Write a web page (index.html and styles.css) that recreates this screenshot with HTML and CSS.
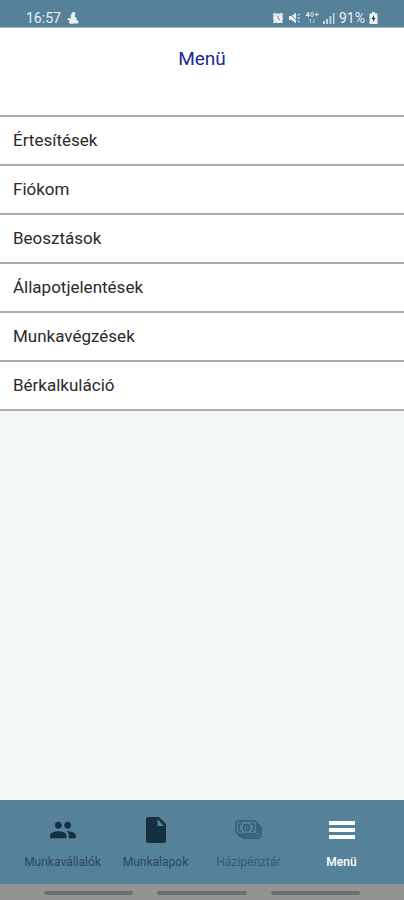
FILE: index.html
```html
<!DOCTYPE html>
<html lang="hu">
<head>
<meta charset="utf-8">
<meta name="viewport" content="width=device-width, initial-scale=1">
<title>Menü</title>
<link rel="stylesheet" href="styles.css">
</head>
<body>
<div class="app">
  <div class="status">
    <span class="status-group">
      <span>16:57</span>
      <svg class="notice" width="12" height="14" viewBox="0 0 12 14" aria-hidden="true"><path d="M5 1.500 7.500 1l1 2-1 2.500L10 7l-1 1.500 2.500 1.500-.5 2.500H7L5 13l-3.500-1L3 9.500.5 9 1 7l3 .5L3.500 5z"/></svg>
    </span>
    <span class="status-group status-right">
      <svg width="12" height="12" viewBox="0 0 12 12" aria-hidden="true"><path d="M.5 2.500 3 .5l1 1L1.500 3.500zM11.500 2.500 9 .5l-1 1 2.500 2zM1 10l2-2 1.500 1.500L2 11.500zM11 10 9 8 7.500 9.500 10 11.500z"/><circle cx="6" cy="6.300" r="4.900"/><path class="cut" d="M6 3.500v3l2 1.200"/></svg>
      <svg width="13" height="12" viewBox="0 0 13 12" aria-hidden="true"><path d="M1 4h2.500L8 .8v10.400L3.500 8H1z"/><path class="wire" d="M9.500 3.500 12 2M9.500 6H12M9.500 8.500l2.500 2"/><path class="cut" d="m1 1 10 10"/></svg>
      <svg width="14" height="13" viewBox="0 0 14 13" aria-hidden="true"><path class="wire" d="M3.500 6V1L1 4.500h3.500M8.500 2.500C8 .5 5.800.8 5.800 3.500s2.700 2.800 2.700.3H7.500M10 3.500h3.500M11.800 1.800v3.500"/><path class="wire faint" d="M5.500 12V8m-1.500 1.500L5.500 8M9 8v4m-1.500-1.500L9 12"/></svg>
      <svg class="signal" width="12" height="12" viewBox="0 0 12 12" aria-hidden="true"><path d="M0 9h2v3H0zM3 7h2v5H3z"/><path d="M6.500 4h1.800v8H6.500zM10 1h1.500v11H10z"/></svg>
      <span>91%</span>
      <svg class="battery" width="9" height="12" viewBox="0 0 9 12" aria-hidden="true"><path d="M3 0h3v1.500h2.500V12H.5V1.500H3z"/><path class="bolt" d="M5 3 2.500 7H4v3l2.500-4H5z"/></svg>
    </span>
  </div>
  <header class="header"><h1>Menü</h1></header>
  <main class="content">
    <ul class="menu">
      <li><a href="#ertesitesek">Értesítések</a></li>
      <li><a href="#fiokom">Fiókom</a></li>
      <li><a href="#beosztasok">Beosztások</a></li>
      <li><a href="#allapotjelentesek">Állapotjelentések</a></li>
      <li><a href="#munkavegzesek">Munkavégzések</a></li>
      <li><a href="#berkalkulacio">Bérkalkuláció</a></li>
    </ul>
  </main>
  <nav class="tabs">
    <a class="tab" href="#munkavallalok">
      <svg width="28" height="28" viewBox="0 0 24 24" aria-hidden="true"><path d="M16 11c1.660 0 2.990-1.340 2.990-3S17.660 5 16 5s-3 1.340-3 3 1.340 3 3 3zm-8 0c1.660 0 2.990-1.340 2.990-3S9.660 5 8 5 5 6.340 5 8s1.340 3 3 3zm0 2c-2.330 0-7 1.170-7 3.500V19h14v-2.500c0-2.330-4.670-3.500-7-3.500zm8 0c-.29 0-.62.020-.97.050 1.160.84 1.970 1.970 1.970 3.450V19h6v-2.500c0-2.330-4.670-3.500-7-3.500z"/></svg>
      <span>Munkavállalók</span>
    </a>
    <a class="tab" href="#munkalapok">
      <svg width="28" height="28" viewBox="0 0 28 28" aria-hidden="true"><path fill-rule="evenodd" d="M6 1h11l7 7v17q0 2-2 2H6q-2 0-2-2V3q0-2 2-2zm9.500 2v7H22z"/></svg>
      <span>Munkalapok</span>
    </a>
    <a class="tab tab-dim" href="#hazipenztar">
      <svg width="28" height="28" viewBox="0 0 28 28" aria-hidden="true"><g class="notes"><path d="M3 5h17l2 2v9l-2 2H3l-2-2V7z"/><path d="M22 7l2 2v9l-2 2H5l-2-2M24 9l2 2v9l-2 2H8l-3-2"/><circle cx="11.500" cy="11.500" r="3"/><path d="M7 8H5L4 9v5l1 1h2M16 8h2l1 1v5l-1 1h-2M11.500 10v3"/></g></svg>
      <span>Házipénztár</span>
    </a>
    <a class="tab tab-active" href="#menu" aria-current="page">
      <svg width="28" height="28" viewBox="0 0 28 28" aria-hidden="true"><path d="M1 5h26v4H1zM1 12h26v4H1zM1 19h26v4H1z"/></svg>
      <span>Menü</span>
    </a>
  </nav>
  <div class="system"><i></i><i></i><i></i></div>
</div>
</body>
</html>
```
FILE: styles.css
```css
* {
  box-sizing: border-box;
}

body {
  margin: 0;
  font-family: Roboto, "Liberation Sans", sans-serif;
  color: #2a2a2a;
}

a {
  color: inherit;
  text-decoration: none;
}

.app {
  display: flex;
  flex-direction: column;
  min-height: 100vh;
  background: #f3f7f8;
}

.status {
  display: flex;
  justify-content: space-between;
  height: 28px;
  padding: 8px 26px 0;
  background: #568299;
  border-bottom: 1px solid #9db7c3;
  color: #e9f1f4;
  font-size: 14px;
  line-height: 18px;
}

.status-group {
  display: flex;
  align-items: center;
  gap: 6px;
}

.status-right {
  gap: 4px;
}

.status svg {
  fill: currentColor;
}

.status .wire {
  fill: none;
  stroke: currentColor;
  stroke-width: 1;
}

.status .faint {
  opacity: 0.5;
}

.status .cut {
  fill: none;
  stroke: #568299;
  stroke-width: 1;
}

.signal {
  opacity: 0.75;
}

.status .bolt {
  fill: #253b46;
}

.header {
  padding: 20px 16px 45px;
  background: #fff;
  text-align: center;
}

.header h1 {
  margin: 0;
  color: #1c2a8c;
  font-size: 19px;
  font-weight: 400;
  line-height: 22px;
}

.content {
  flex: 1;
}

.menu {
  margin: 0;
  padding: 0;
  list-style: none;
  background: #fff;
  border-top: 2px solid #acacac;
}

.menu li {
  border-bottom: 2px solid #acacac;
}

.menu a {
  display: block;
  padding: 13px;
  font-size: 17px;
  line-height: 21px;
}

.tabs {
  display: grid;
  grid-template-columns: repeat(4, 1fr);
  padding: 16px 16px 14px;
  background: #568299;
}

.tab {
  display: flex;
  flex-direction: column;
  align-items: center;
  gap: 10px;
  color: #2b4959;
  font-size: 12px;
  line-height: 16px;
}

.tab svg {
  fill: #142f3e;
}

.tab-dim {
  color: #365b70;
}

.tab-dim .notes {
  fill: none;
  stroke: #365b70;
  stroke-width: 1.5;
}

.tab-active {
  color: #fff;
  font-weight: 500;
}

.tab-active svg {
  fill: #fff;
}

.system {
  display: flex;
  justify-content: center;
  gap: 24px;
  height: 16px;
  padding: 7px 44px 0;
  background: #929492;
}

.system i {
  flex: 1;
  height: 4px;
  border-radius: 2px;
  background: #6c6e6e;
}
```
